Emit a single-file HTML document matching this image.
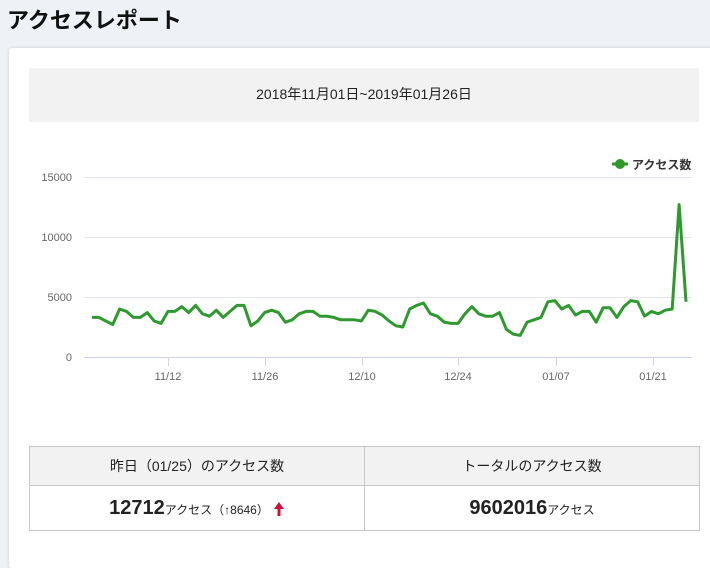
<!DOCTYPE html>
<html><head><meta charset="utf-8"><style>
body{margin:0;width:710px;height:540px;overflow:hidden;background:#eef1f5;font-family:"Liberation Sans","Noto Sans CJK JP",sans-serif;position:relative}
.t{position:absolute;left:7px;top:3px;font-size:22px;font-weight:bold;color:#111}
.card{position:absolute;left:9px;top:48px;width:720px;height:520px;background:#fff;border-radius:3px;box-shadow:0 0 3px rgba(0,0,0,.15)}
.date{position:absolute;left:29px;top:68px;width:670px;height:54px;background:#f2f2f2;text-align:center;line-height:52px;font-size:14px;color:#222}
table{position:absolute;left:29px;top:446px;width:671px;border-collapse:collapse}
td{border:1px solid #c8c8c8;text-align:center;color:#222;padding:0}
tr.h td{background:#f2f2f2;height:38px;font-size:14px}
tr.v td{height:44px;font-size:12px}
b{font-size:20px}
</style></head><body>
<div class="t">アクセスレポート</div>
<div class="card"></div>
<div class="date">2018年11月01日~2019年01月26日</div>
<svg id="c" style="position:absolute;left:0;top:0" width="710" height="420">
<g stroke="#e3e6ea" stroke-width="1">
<line x1="84" y1="177.5" x2="692" y2="177.5"/><line x1="84" y1="237.5" x2="692" y2="237.5"/><line x1="84" y1="297.5" x2="692" y2="297.5"/><line x1="84" y1="357.5" x2="692" y2="357.5" stroke="#ccd6eb"/>
</g>
<g font-size="11" fill="#666" text-anchor="end" font-family="Liberation Sans,sans-serif">
<text x="72" y="181">15000</text><text x="72" y="241">10000</text><text x="72" y="301">5000</text><text x="72" y="361">0</text>
</g>
<g font-size="11" fill="#666" text-anchor="middle" font-family="Liberation Sans,sans-serif">
<text x="168" y="380">11/12</text><text x="265" y="380">11/26</text><text x="362" y="380">12/10</text><text x="458" y="380">12/24</text><text x="556" y="380">01/07</text><text x="653" y="380">01/21</text>
</g>
<g stroke="#ccd6eb"><line x1="168.5" y1="358" x2="168.5" y2="366"/><line x1="265.5" y1="358" x2="265.5" y2="366"/><line x1="362.5" y1="358" x2="362.5" y2="366"/><line x1="458.5" y1="358" x2="458.5" y2="366"/><line x1="556.5" y1="358" x2="556.5" y2="366"/><line x1="653.5" y1="358" x2="653.5" y2="366"/></g>
<polyline id="p" fill="none" stroke="#2e9a2e" stroke-width="3" stroke-linejoin="round"/>
<line x1="612" y1="164" x2="628" y2="164" stroke="#2e9a2e" stroke-width="3"/><circle cx="620" cy="164" r="5" fill="#2e9a2e"/>
<text x="632" y="169" font-size="12" font-weight="bold" fill="#333">アクセス数</text>
</svg>
<script>
var d=[3.3,3.3,3.0,2.7,4.0,3.8,3.3,3.3,3.7,3.0,2.8,3.8,3.8,4.2,3.7,4.3,3.6,3.4,3.9,3.3,3.8,4.3,4.3,2.6,3.0,3.7,3.9,3.7,2.9,3.1,3.6,3.8,3.8,3.4,3.4,3.3,3.1,3.1,3.1,3.0,3.9,3.8,3.5,3.0,2.6,2.5,4.0,4.3,4.5,3.6,3.4,2.9,2.8,2.8,3.6,4.2,3.6,3.4,3.4,3.7,2.3,1.9,1.8,2.9,3.1,3.3,4.6,4.7,4.0,4.3,3.5,3.8,3.8,2.9,4.1,4.1,3.3,4.2,4.7,4.6,3.4,3.8,3.6,3.9,4.0,12.7,4.6];
var s=(686-92)/(d.length-1),p=[];
for(var i=0;i<d.length;i++)p.push((92+i*s).toFixed(1)+","+(357-d[i]*12).toFixed(1));
document.getElementById("p").setAttribute("points",p.join(" "));
</script>
<table>
<tr class="h"><td style="width:334px">昨日（01/25）のアクセス数</td><td>トータルのアクセス数</td></tr>
<tr class="v"><td><b>12712</b>アクセス（↑8646）<svg width="12" height="16" style="vertical-align:-3px;margin-left:4px"><path d="M6 1 L11 8 L7.5 8 L7.5 15 L4.5 15 L4.5 8 L1 8 Z" fill="#d0103a"/></svg></td><td><b>9602016</b>アクセス</td></tr>
</table>
</body></html>
